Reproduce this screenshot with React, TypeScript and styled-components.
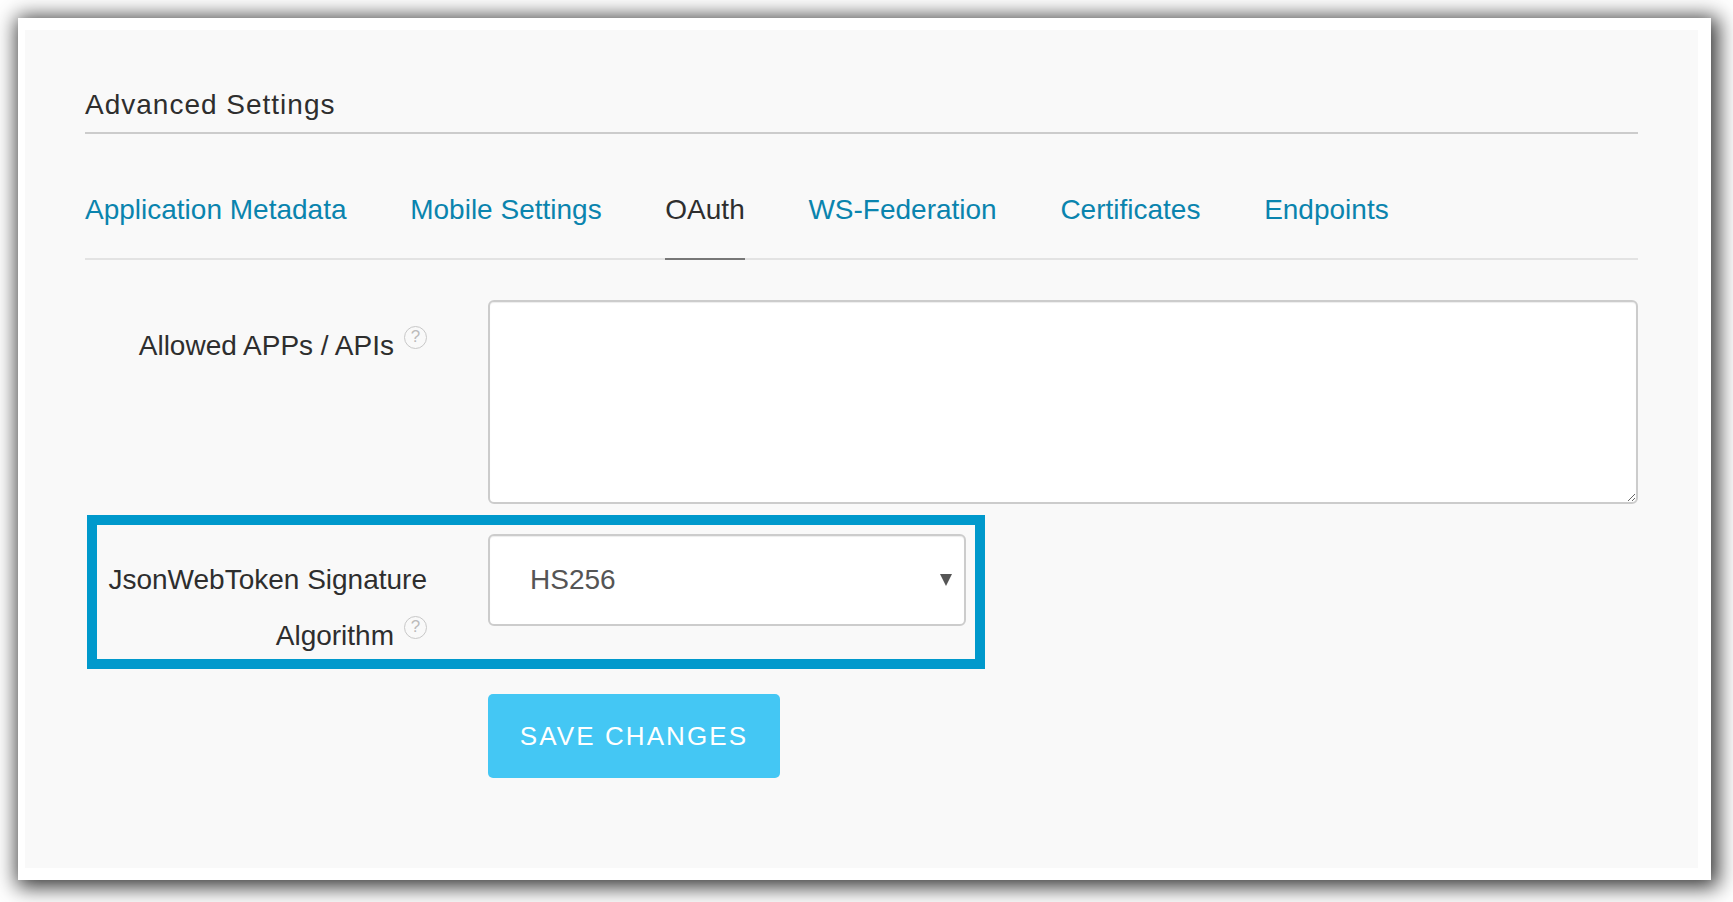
import React from 'react'
import styled, { createGlobalStyle } from 'styled-components'

const GlobalStyle = createGlobalStyle`
  html, body {
    margin: 0;
    padding: 0;
    background: #ffffff;
  }
  * {
    box-sizing: border-box;
  }
`

const Page = styled.div`
  width: 1733px;
  height: 902px;
  padding: 18px 22px 22px 18px;
  overflow: hidden;
  font-family: "Liberation Sans", Arial, sans-serif;
  color: #2e2e2e;
`
const Card = styled.div`
  height: 862px;
  padding: 12px 13px 12px 7px;
  background: #ffffff;
  box-shadow: 3px 3px 20px 4px rgba(0, 0, 0, 0.8);
`
const Panel = styled.main`
  height: 838px;
  padding: 0 60px;
  background: #f9f9f9;
`
const Heading = styled.h1`
  margin: 0;
  height: 104px;
  padding-top: 59px;
  border-bottom: 2px solid #cccccc;
  font-size: 28px;
  line-height: 32px;
  font-weight: 400;
  letter-spacing: 1px;
  color: #2e2e2e;
`
const TabBar = styled.nav`
  display: flex;
  gap: 63.7px;
  height: 126px;
  padding-top: 49px;
  border-bottom: 2px solid #e3e3e3;
`
const Tab = styled.a<{ $active?: boolean }>`
  display: block;
  height: 77px;
  padding-top: 11px;
  font-size: 28px;
  line-height: 32px;
  text-decoration: none;
  color: ${(p) => (p.$active ? '#2e2e2e' : '#0a84ae')};
  border-bottom: 2px solid ${(p) => (p.$active ? '#777777' : 'transparent')};
`
const Row = styled.div`
  display: flex;
  margin-top: 40px;
`
const Label = styled.label`
  width: 342px;
  padding-top: 18px;
  font-size: 28px;
  line-height: 56px;
  text-align: right;
  color: #2e2e2e;
`
const Help = styled.span`
  display: inline-block;
  width: 23px;
  height: 23px;
  margin-left: 10px;
  border: 1.5px solid #c8c8c8;
  border-radius: 50%;
  font-size: 17px;
  line-height: 20px;
  text-align: center;
  color: #bbbbbb;
  vertical-align: 13px;
`
const Field = styled.div`
  margin-left: 61px;
`
const TextArea = styled.textarea`
  display: block;
  width: 1150px;
  height: 204px;
  padding: 12px 20px;
  border: 2px solid #cccccc;
  border-radius: 6px;
  outline: none;
  background: #ffffff;
  box-shadow: inset 0 1px 1px rgba(0, 0, 0, 0.075);
`
const Highlight = styled.section`
  display: flex;
  width: 898px;
  height: 154px;
  margin: 11px 0 0 2px;
  border: 10px solid #0099cc;
`
const HighlightLabel = styled(Label)`
  width: 330px;
  padding-top: 27px;
`
const SelectWrap = styled.div`
  position: relative;
  margin: 9px 0 0 61px;
`
const Select = styled.select`
  display: block;
  width: 478px;
  height: 92px;
  padding: 0 40px 2px;
  border: 2px solid #cccccc;
  border-radius: 6px;
  outline: none;
  appearance: none;
  background: #ffffff;
  box-shadow: inset 0 1px 1px rgba(0, 0, 0, 0.075);
  font-family: inherit;
  font-size: 28px;
  color: #555555;
`
const Caret = styled.svg`
  position: absolute;
  top: 40px;
  right: 14px;
  width: 12px;
  height: 12px;
  fill: #555555;
`
const ButtonRow = styled.div`
  margin: 25px 0 0 403px;
`
const SaveButton = styled.button`
  display: block;
  width: 292px;
  height: 84px;
  padding: 0;
  border: 0;
  border-radius: 5px;
  background: #44c7f4;
  color: #ffffff;
  font-family: inherit;
  font-size: 26px;
  letter-spacing: 2.1px;
`

const tabs = [
  'Application Metadata',
  'Mobile Settings',
  'OAuth',
  'WS-Federation',
  'Certificates',
  'Endpoints',
]

const App = () => {
  return (
    <Page>
      <GlobalStyle />
      <Card>
        <Panel>
          <Heading>Advanced Settings</Heading>
          <TabBar>
            {tabs.map((t) => (
              <Tab key={t} href="#" $active={t === 'OAuth'}>
                {t}
              </Tab>
            ))}
          </TabBar>
          <Row>
            <Label>
              Allowed APPs / APIs<Help>?</Help>
            </Label>
            <Field>
              <TextArea />
            </Field>
          </Row>
          <Highlight>
            <HighlightLabel>
              JsonWebToken Signature Algorithm<Help>?</Help>
            </HighlightLabel>
            <SelectWrap>
              <Select defaultValue="HS256">
                <option>HS256</option>
                <option>RS256</option>
              </Select>
              <Caret viewBox="0 0 12 12">
                <path d="M0 0h12L6 12z" />
              </Caret>
            </SelectWrap>
          </Highlight>
          <ButtonRow>
            <SaveButton>SAVE CHANGES</SaveButton>
          </ButtonRow>
        </Panel>
      </Card>
    </Page>
  )
}

export default App
